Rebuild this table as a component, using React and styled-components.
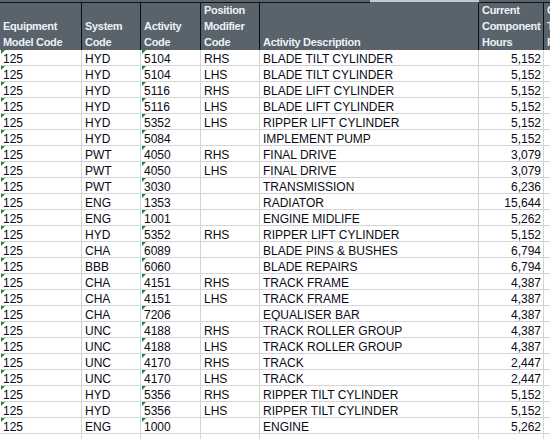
import styled, { createGlobalStyle } from "styled-components";

const GlobalStyle = createGlobalStyle`
  * { box-sizing: border-box; }
  body {
    margin: 0;
    background: #ffffff;
    font-family: "Liberation Sans Narrow", "Liberation Sans", Arial, sans-serif;
  }
`;

const COLS = "82px 59px 60px 59px 219px 65px 80px";

const rows = [
  ["HYD", "5104", "RHS", "BLADE TILT CYLINDER", "5,152"],
  ["HYD", "5104", "LHS", "BLADE TILT CYLINDER", "5,152"],
  ["HYD", "5116", "RHS", "BLADE LIFT CYLINDER", "5,152"],
  ["HYD", "5116", "LHS", "BLADE LIFT CYLINDER", "5,152"],
  ["HYD", "5352", "LHS", "RIPPER LIFT CYLINDER", "5,152"],
  ["HYD", "5084", "", "IMPLEMENT PUMP", "5,152"],
  ["PWT", "4050", "RHS", "FINAL DRIVE", "3,079"],
  ["PWT", "4050", "LHS", "FINAL DRIVE", "3,079"],
  ["PWT", "3030", "", "TRANSMISSION", "6,236"],
  ["ENG", "1353", "", "RADIATOR", "15,644"],
  ["ENG", "1001", "", "ENGINE MIDLIFE", "5,262"],
  ["HYD", "5352", "RHS", "RIPPER LIFT CYLINDER", "5,152"],
  ["CHA", "6089", "", "BLADE PINS & BUSHES", "6,794"],
  ["BBB", "6060", "", "BLADE REPAIRS", "6,794"],
  ["CHA", "4151", "RHS", "TRACK FRAME", "4,387"],
  ["CHA", "4151", "LHS", "TRACK FRAME", "4,387"],
  ["CHA", "7206", "", "EQUALISER BAR", "4,387"],
  ["UNC", "4188", "RHS", "TRACK ROLLER GROUP", "4,387"],
  ["UNC", "4188", "LHS", "TRACK ROLLER GROUP", "4,387"],
  ["UNC", "4170", "RHS", "TRACK", "2,447"],
  ["UNC", "4170", "LHS", "TRACK", "2,447"],
  ["HYD", "5356", "RHS", "RIPPER TILT CYLINDER", "5,152"],
  ["HYD", "5356", "LHS", "RIPPER TILT CYLINDER", "5,152"],
  ["ENG", "1000", "", "ENGINE", "5,262"],
];

const headers = [
  ["Equipment", "Model Code"],
  ["System", "Code"],
  ["Activity", "Code"],
  ["Position", "Modifier", "Code"],
  ["Activity Description"],
  ["Current", "Component", "Hours"],
  ["C", "T", "P"],
];

const Sheet = styled.div`
  width: 550px;
  height: 439px;
  overflow: hidden;
  background: #fff;
`;

const TopStrip = styled.div`
  display: flex;
  height: 3px;
  width: 630px;
`;

const StripPart = styled.div`
  flex: ${(p) => (p.$w ? `0 0 ${p.$w}px` : "1")};
  background: ${(p) => (p.$light ? "#c3c9cf" : "#59636c")};
  border-bottom: 1px solid ${(p) => (p.$light ? "#59636c" : "#101214")};
`;

const Grid = styled.div`
  display: grid;
  grid-template-columns: ${COLS};
  width: 624px;
`;

const HeadCell = styled.div`
  height: 47px;
  background: #59636c;
  border-right: 1px solid #0c0e10;
  padding: 0 2px 0 3px;
  display: flex;
  flex-direction: column;
  justify-content: flex-end;
  color: #eef2f5;
  font-family: "Liberation Sans", Arial, sans-serif;
  font-weight: bold;
  font-size: 11px;
  letter-spacing: -0.3px;
  line-height: 16px;
  white-space: nowrap;
  overflow: hidden;
`;

const Cell = styled.div`
  position: relative;
  height: 16px;
  border-right: 1px solid #d4d4d4;
  border-bottom: 1px solid #d4d4d4;
  padding: 2px ${(p) => (p.$right ? "2px" : "3px")} 0 3px;
  font-size: 12px;
  line-height: 14px;
  color: #0a0a14;
  text-align: ${(p) => (p.$right ? "right" : "left")};
  white-space: nowrap;
  overflow: hidden;
`;

const Flag = styled.span`
  position: absolute;
  top: 0;
  left: 1px;
  width: 0;
  height: 0;
  border-top: 4px solid #1c8a2c;
  border-right: 4px solid transparent;
`;

export default function App() {
  return (
    <Sheet>
      <GlobalStyle />
      <TopStrip>
        <StripPart $w={370} />
        <StripPart $w={109} $light />
        <StripPart />
      </TopStrip>
      <Grid>
        {headers.map((lines, i) => (
          <HeadCell key={i}>
            {lines.map((l) => (
              <span key={l}>{l}</span>
            ))}
          </HeadCell>
        ))}
        {rows.map((r, i) => [
          <Cell key={`${i}a`}>
            <Flag />
            125
          </Cell>,
          <Cell key={`${i}b`}>{r[0]}</Cell>,
          <Cell key={`${i}c`}>
            <Flag />
            {r[1]}
          </Cell>,
          <Cell key={`${i}d`}>{r[2]}</Cell>,
          <Cell key={`${i}e`}>{r[3]}</Cell>,
          <Cell key={`${i}f`} $right>
            {r[4]}
          </Cell>,
          <Cell key={`${i}g`} />,
        ])}
        {Array.from({ length: 7 }).map((_, i) => (
          <Cell key={`blank${i}`} />
        ))}
      </Grid>
    </Sheet>
  );
}
